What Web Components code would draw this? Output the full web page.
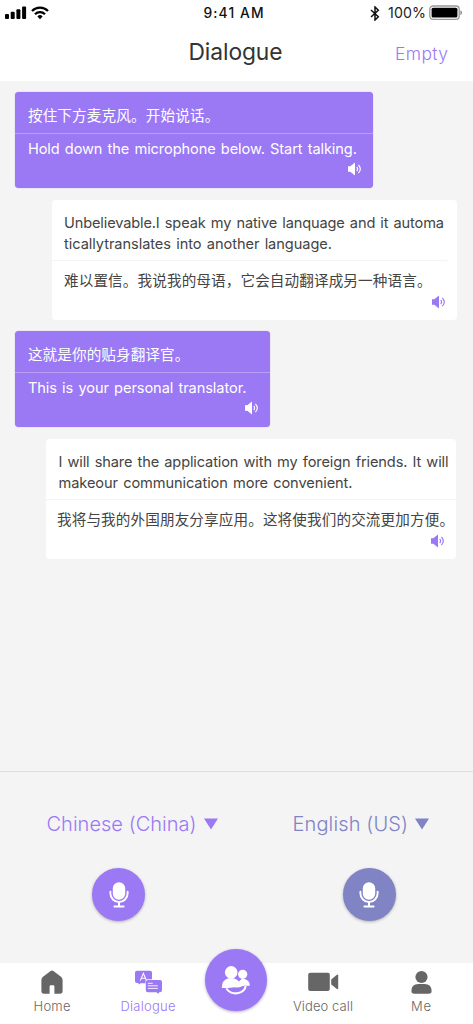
<!DOCTYPE html>
<html lang="en">
<head>
<meta charset="utf-8">
<title>Dialogue</title>
<style>
html,body{margin:0;height:100%}
body{font-family:Inter,"Noto Sans CJK SC",sans-serif;background:#f4f4f4;overflow:hidden}
</style>
</head>
<body>
<dialogue-app></dialogue-app>
<script>
const define = (name, html, setup) => customElements.define(name, class extends HTMLElement {
  connectedCallback() {
    if (this.shadowRoot) return;
    const t = document.createElement('template');
    t.innerHTML = html;
    this.attachShadow({mode: 'open'}).append(t.content.cloneNode(true));
    if (setup) setup(this, this.shadowRoot);
  }
});

// One line of text, tracked so that it takes the width given in "w".
define('fit-text', `<style>:host{display:block;white-space:nowrap}span{display:inline-block}</style><span><slot></slot></span>`, (el, root) => {
  const span = root.querySelector('span');
  const n = el.textContent.length;
  const apply = () => {
    span.style.letterSpacing = '0';
    const gap = (Number(el.getAttribute('w')) - span.getBoundingClientRect().width) / (n - 1);
    span.style.letterSpacing = gap + 'px';
    span.style.marginRight = -gap + 'px';
  };
  apply();
});

define('status-bar', `<style>
:host{display:grid;grid-template-columns:1fr auto 1fr;height:26px;align-items:center;color:#111;padding:0 10px 0 5px}
.l,.r{display:flex;align-items:center}.r{justify-content:flex-end}
.t{font-size:13.8px;font-weight:550;margin-right:1px}
.p{font-size:14.2px;margin:-1px 3px 0 8px;color:#222}
svg{display:block}
</style>
<div class="l"><svg width="44" height="14" viewBox="0 0 44 14"><g fill="#000"><rect x="0" y="8" width="4" height="5" rx="1"/><rect x="5.7" y="5.8" width="4" height="7.2" rx="1"/><rect x="11.4" y="3.2" width="4" height="9.8" rx="1"/><rect x="17.1" y=".5" width="4" height="12.5" rx="1"/></g>
<g fill="none" stroke="#000" stroke-width="2.3"><path d="M27 5a11.4 11.4 0 0 1 16 0"/><path d="M30 8.2a7.1 7.1 0 0 1 10 0"/></g><path d="M32.4 10.4a3.7 3.7 0 0 1 5.2 0L35 13.2z"/></svg></div>
<fit-text class="t" w="60">9:41 AM</fit-text>
<div class="r"><svg width="10" height="15" viewBox="0 0 10 15"><path d="M1 4l7.3 6.8L5 14V1l3.3 3.2L1 11" fill="none" stroke="#111" stroke-width="1.5"/></svg><fit-text class="p" w="38">100%</fit-text>
<svg width="34" height="16" viewBox="0 0 34 16"><rect x=".8" y="1" width="29.4" height="13.4" rx="3.3" fill="none" stroke="#999" stroke-width="1.3"/><rect x="2.6" y="2.8" width="25.8" height="9.8" rx="1.5"/><path d="M31.4 5.2q1.6.6 1.6 2.5t-1.6 2.5z" fill="#888"/></svg></div>`);

define('title-bar', `<style>
:host{display:grid;grid-template-columns:1fr auto 1fr;height:55px;align-items:center;color:#333}
.h{font-size:22.8px;font-weight:400;padding:0 2px 5px 0}
.e{font-size:17.5px;font-weight:300;color:#9a78f4;justify-self:end;margin-right:25px}
</style><span></span><fit-text class="h" w="94">Dialogue</fit-text><fit-text class="e" w="53">Empty</fit-text>`);

define('speaker-icon', `<style>:host{display:block;width:14px;height:14px}svg{display:block}</style>
<svg width="14" height="14" viewBox="0 0 14 14"><path d="M0 4.3h2.3L7 .6v12.8L2.3 9.7H0z" fill="currentColor"/><path d="M8.7 5q1.8 2 0 4M10.4 2.8q3.8 4.2 0 8.4" fill="none" stroke="currentColor" stroke-width="1.15"/></svg>`);

// A chat bubble: the spoken text above the rule, its translation below.
define('chat-bubble', `<style>
:host{display:block;box-sizing:border-box;width:var(--w);height:120px;border-radius:4px;background:#fff;color:#444;position:relative;font-size:14.6px;line-height:20.5px;margin-left:var(--x);margin-top:var(--up,0);word-spacing:1.2px}
:host([mine]){height:96px;background:#9b78f4;color:#fff;box-shadow:0 0 1px #9b78f4}
.a{box-sizing:border-box;height:61px;padding:13px 0 0 var(--a,12.5px);border-bottom:1px solid #f4f4f4;margin-right:var(--rule,0)}
.b{padding:9.5px 0 0 var(--b,12.5px)}
:host([mine]) .a{height:42px;padding-top:14px;border-color:#b79ff7}
:host([mine]) .b{padding-top:5px}
speaker-icon{position:absolute;right:11px;bottom:11px;color:#9b78f4}
:host([mine]) speaker-icon{color:#fff;right:11px;bottom:12px}
</style><div class="a"><slot></slot></div><div class="b"><slot name="to"></slot></div><speaker-icon></speaker-icon>`);

define('mic-button', `<style>
:host{display:grid;place-items:center;width:53px;height:53px;border-radius:50%;background:currentColor;box-shadow:0 1px 3px rgba(0,0,0,.28)}
svg{display:block}</style>
<svg width="20" height="26" viewBox="0 0 20 26"><rect x="3.8" y=".2" width="12.4" height="17.6" rx="6.2" fill="#fff"/><path d="M1.4 9.6v1.8a8.6 8.6 0 0 0 17.2 0V9.6" fill="none" stroke="#fff" stroke-width="1.9" stroke-linecap="round"/><path d="M10 20v4M5.4 24.4h9.2" fill="none" stroke="#fff" stroke-width="2" stroke-linecap="round"/></svg>`);

define('language-picker', `<style>
:host{display:flex;flex-direction:column;align-items:flex-start;width:var(--w)}
.n{display:flex;align-items:center;height:30px;font-size:20px;font-weight:300;gap:7px}
.n svg{display:block}
mic-button{margin:29px 0 0 var(--mic)}
</style><div class="n"><slot></slot><svg width="14" height="12" viewBox="0 0 14 12"><path d="M0 .5h14L7 11.5z" fill="currentColor"/></svg></div><mic-button></mic-button>`);

define('talk-panel', `<style>
:host{display:flex;box-sizing:border-box;height:192px;border-top:1px solid #dedede;padding:37px 0 0 46px;gap:74px}
fit-text{padding-left:.5px}
</style>
<language-picker style="color:#9b78f4;--w:172px;--mic:46px"><fit-text w="150">Chinese (China)</fit-text></language-picker>
<language-picker style="color:#8083c4;--w:140px;--mic:50.5px"><fit-text w="115.5">English (US)</fit-text></language-picker>`);

define('tab-item', `<style>
:host{display:flex;flex-direction:column;align-items:center;color:#666;font-size:13px;font-weight:350}
:host([active]){color:#9b78f4}
.i{height:25px;margin-top:7px}.l{line-height:16px;margin-top:3px}
</style><div class="i"><slot name="icon"></slot></div><div class="l"><slot></slot></div>`);

define('tab-bar', `<style>
:host{display:grid;grid-template-columns:104px 88px 89px 84px 108px;height:61px;background:#fff}
svg{display:block}
.c{display:grid;place-items:center;width:62px;height:62px;border-radius:50%;background:#9b78f4;margin:-14px 0 0 13.4px;box-shadow:0 1px 3px rgba(60,40,120,.4)}
.me{padding-left:4px}
</style>
<tab-item><svg slot="icon" width="22" height="24" viewBox="0 0 22 24"><path d="M9.3 1.2Q11 0 12.7 1.2L20 6.8Q21.6 8.1 21.6 10V21Q21.6 23.8 19 23.8H13.4V16.4Q13.4 15.2 12.2 15.2H9.8Q8.6 15.2 8.6 16.4V23.8H3Q.4 23.8.4 21V10Q.4 8.1 2 6.8z" fill="#666"/></svg><fit-text w="37">Home</fit-text></tab-item>
<tab-item active><svg slot="icon" width="27" height="24" viewBox="0 0 27 24"><path d="M2 .8h13q2 0 2 2v6.4h-4.5q-2 0-2 2v2H5.5L4 14.5 3.2 13H2q-2 0-2-2V2.8q0-2 2-2z" fill="#9b78f4"/><path d="M12.8 9.9H25q2 0 2 2v8.3q0 2-2 2h-.8L23 23.8l-1.6-1.6h-8.6q-2 0-2-2v-8.3q0-2 2-2z" fill="#9b78f4"/><path d="M5.3 10.6 8.4 3.3l3.1 7.3M6.4 8.3h4" fill="none" stroke="#fff" stroke-width="1.1"/><path d="M12.8 13.3h5M12.8 15.8h10M12.8 18.4h10" stroke="#fff" stroke-width=".9"/></svg><fit-text w="55">Dialogue</fit-text></tab-item>
<div class="c"><svg width="30" height="32" viewBox="0 0 30 32"><g fill="#fff"><circle cx="10.2" cy="8.4" r="6.3"/><circle cx="21.7" cy="10.3" r="4.6"/><path d="M.8 24q0-8 6.6-9.7h5.6q3.4 1.2 5 3.2 1.4-1.8 2.8-2.4h2.8q5.4 1.6 5.2 6.6h-5.2V24z"/></g><path d="M5.4 24.2a9.9 7.8 0 0 0 19.4-2.4" fill="#9b78f4"/><path d="M11.5 22.6q5 2.4 10-.9v-1.4h-10z" fill="#fff"/><path d="M5.4 24.4a9.9 7.6 0 0 0 19.2-2.4" fill="none" stroke="#fff" stroke-width="2.1"/></svg></div>
<tab-item><svg slot="icon" width="31" height="24" viewBox="0 0 31 24"><rect x=".2" y="2.8" width="21.6" height="18.2" rx="2" fill="#666"/><path d="M23.2 9.6 28.6 5Q30.2 4 30.2 5.6V18.2Q30.2 19.8 28.6 18.8L23.2 14.6z" fill="#666"/></svg><fit-text w="60">Video call</fit-text></tab-item>
<tab-item class="me"><svg slot="icon" width="21" height="24" viewBox="0 0 21 24"><circle cx="10.5" cy="7" r="6.1" fill="#666"/><path d="M.4 21Q.4 14 7.5 14h6q7.1 0 7.1 7 0 2.8-2.8 2.8H3.2Q.4 23.8.4 21z" fill="#666"/></svg><fit-text w="20">Me</fit-text></tab-item>`);

define('dialogue-app', `<style>
:host{display:flex;flex-direction:column;width:473px;height:1024px;background:#f4f4f4}
header{background:#fff}
main{flex:1;display:flex;flex-direction:column;gap:12px;padding-top:11px;min-height:0}
</style>
<header><status-bar></status-bar><title-bar></title-bar></header>
<main>
<chat-bubble mine style="--w:357.5px;--x:15.4px"><fit-text w="191.5">按住下方麦克风。开始说话。</fit-text><fit-text slot="to" w="329">Hold down the microphone below. Start talking.</fit-text></chat-bubble>
<chat-bubble style="--w:405px;--x:52px;--rule:10px;--a:12px;--b:12px"><fit-text w="380">Unbelievable.I speak my native lanquage and it automa</fit-text><fit-text w="268">ticallytranslates into another language.</fit-text><fit-text slot="to" w="367.5">难以置信。我说我的母语，它会自动翻译成另一种语言。</fit-text></chat-bubble>
<chat-bubble mine style="--w:255px;--x:15.4px;--up:-1px"><fit-text w="161.5">这就是你的贴身翻译官。</fit-text><fit-text slot="to" w="218.5">This is your personal translator.</fit-text></chat-bubble>
<chat-bubble style="--w:410px;--x:46px;--a:12.5px;--b:11px"><fit-text w="390">I will share the application with my foreign friends. It will</fit-text><fit-text w="294">makeour communication more convenient.</fit-text><fit-text slot="to" w="397">我将与我的外国朋友分享应用。这将使我们的交流更加方便。</fit-text></chat-bubble>
</main>
<talk-panel></talk-panel>
<tab-bar></tab-bar>`);
</script>
</body>
</html>
